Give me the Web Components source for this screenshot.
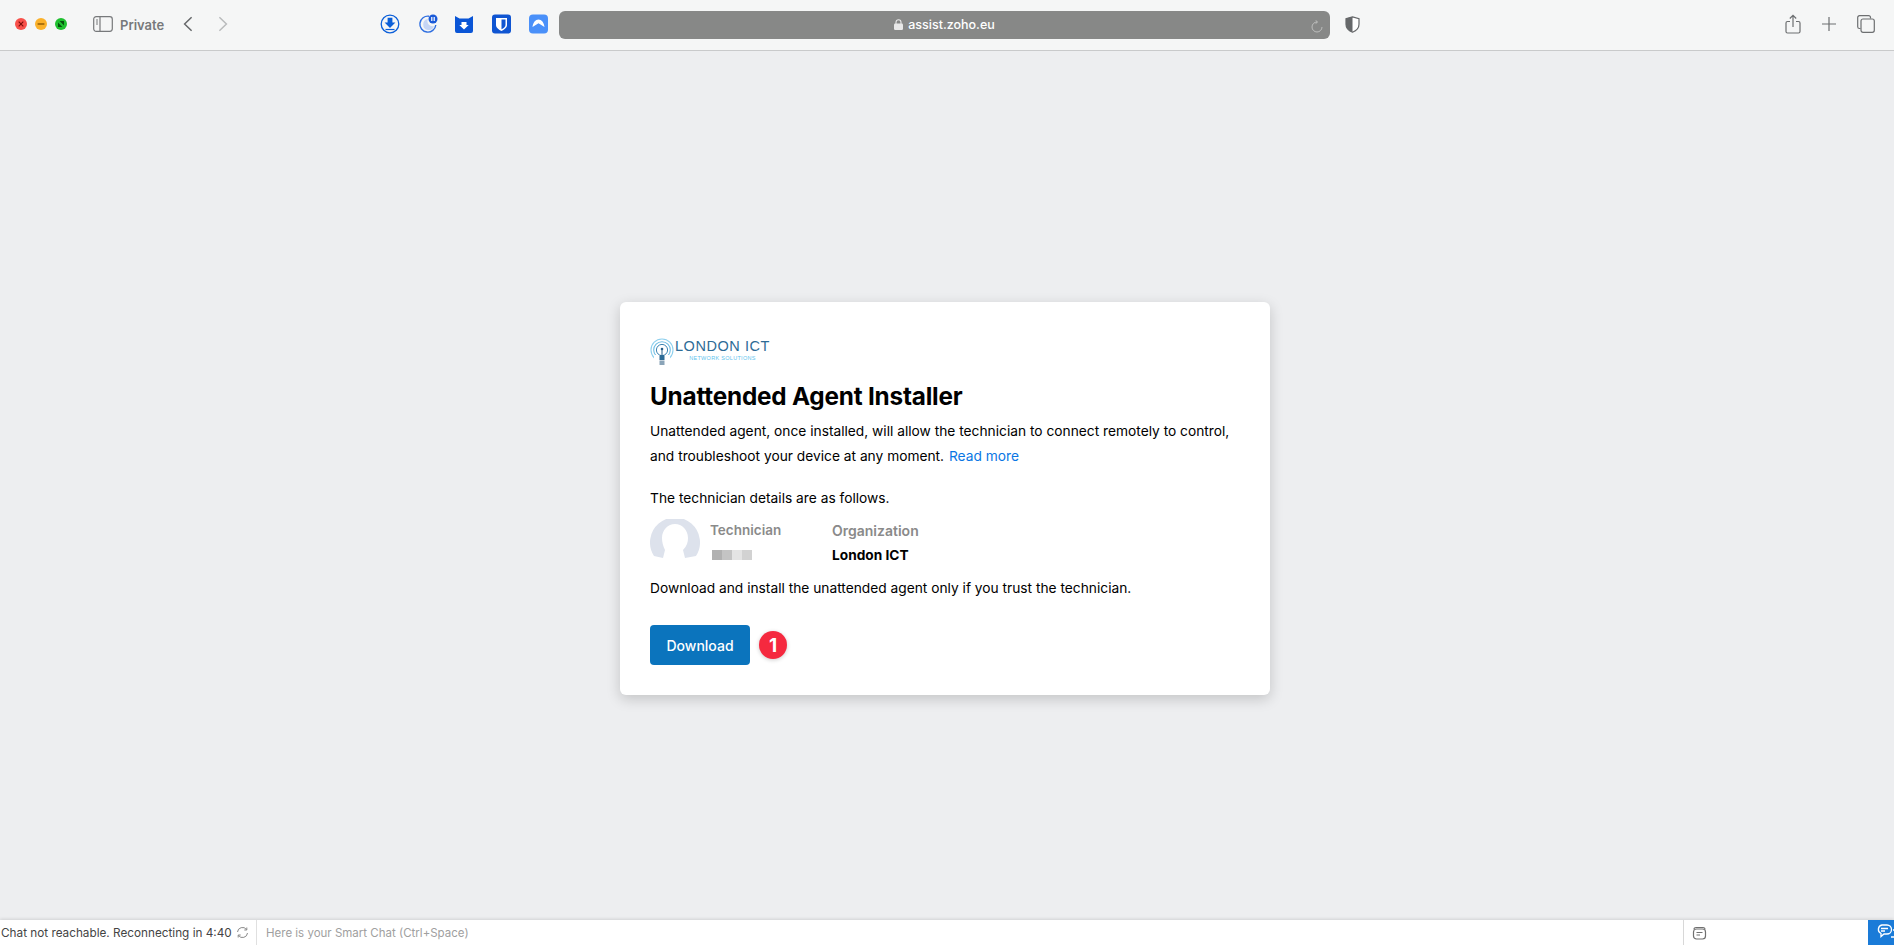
<!DOCTYPE html>
<html lang="en">
<head>
<meta charset="utf-8">
<title>Unattended Agent Installer</title>
<style>
  html, body { margin: 0; height: 100%; }
  body { font-family: Inter, "Liberation Sans", sans-serif; background: #edeef0; overflow: hidden; }
</style>
</head>
<body>
<app-shell>
  <browser-toolbar slot="top" url="assist.zoho.eu"></browser-toolbar>
  <installer-card>
    <brand-logo slot="logo"></brand-logo>
    <span slot="title">Unattended Agent Installer</span>
    <technician-details slot="details" organization="London ICT"></technician-details>
  </installer-card>
  <chat-bar slot="bottom"></chat-bar>
</app-shell>

<script>
class AppShell extends HTMLElement {
  constructor() {
    super();
    this.attachShadow({ mode: 'open' });
    this.shadowRoot.innerHTML = `
      <style>
        :host { display: flex; flex-direction: column; width: 1894px; height: 945px; }
        main { flex: 1; display: flex; justify-content: center; align-items: flex-start; padding: 251px 4px 0 0; box-sizing: border-box; }
      </style>
      <slot name="top"></slot>
      <main><slot></slot></main>
      <slot name="bottom"></slot>
    `;
  }
}

class BrowserToolbar extends HTMLElement {
  constructor() {
    super();
    this.attachShadow({ mode: 'open' });
  }

  connectedCallback() {
    const url = this.getAttribute('url') || '';
    this.shadowRoot.innerHTML = `
      <style>
        :host { display: flex; align-items: center; height: 50px; background: #f5f6f6; border-bottom: 1px solid #c9cacb; flex: none; box-sizing: content-box; font-family: Inter, sans-serif; }
        svg { display: block; flex: none; }
        .lights { display: flex; gap: 8px; margin-left: 15px; margin-top: -2px; }
        .lights svg { width: 12px; height: 12px; }
        .sidebar { margin-left: 26px; margin-top: -2px; }
        .private { margin-left: 7px; font-size: 13px; font-weight: 600; color: #77797b; width: 46px; margin-top: -1px; }
        .back { margin-left: 17px; margin-top: -2px; }
        .forward { margin-left: 25px; margin-top: -2px; }
        .exts { display: flex; gap: 18px; margin-left: 152px; margin-top: -2px; }
        .cat { margin-left: -1px; margin-right: 1px; }
        .url { margin-left: 11px; width: 771px; height: 28px; margin-top: -1px; border-radius: 6px; background: #878887; display: flex; align-items: center; justify-content: center; position: relative; color: #fff; font-size: 12.500px; font-weight: 500; gap: 5px; }
        .url .reload { position: absolute; right: 7px; top: 9px; }
        .shield { margin-left: 15px; margin-top: -2px; }
        .right { margin-left: auto; margin-right: 19px; display: flex; gap: 21px; align-items: center; margin-top: -2px; }
      </style>
      <div class="lights">
        <svg viewBox="0 0 12 12"><circle cx="6" cy="6" r="6" fill="#f8504a"/><path d="M3.700 3.700l4.600 4.600M8.300 3.700l-4.600 4.600" stroke="#7a0c08" stroke-width="1.100"/></svg>
        <svg viewBox="0 0 12 12"><circle cx="6" cy="6" r="6" fill="#fbb12a"/><path d="M2.600 6h6.800" stroke="#8c5a05" stroke-width="1.400"/></svg>
        <svg viewBox="0 0 12 12"><circle cx="6" cy="6" r="6" fill="#1fc02f"/><path d="M3 9V4.600L7.400 9zM9 3v4.400L4.600 3z" fill="#06520e"/></svg>
      </div>
      <svg class="sidebar" width="20" height="16" viewBox="0 0 20 16" fill="none" stroke="#77797b" stroke-width="1.200"><rect x=".7" y=".7" width="18.600" height="14.600" rx="2.500"/><path d="M7 .7v14.600"/><path d="M3 4h2M3 6h2M3 8h2" stroke-width="1"/></svg>
      <span class="private">Private</span>
      <svg class="back" width="10" height="16" viewBox="0 0 10 16" fill="none" stroke="#66686a" stroke-width="1.500"><path d="M8.600 1.200L1.600 8l7 6.800"/></svg>
      <svg class="forward" width="10" height="16" viewBox="0 0 10 16" fill="none" stroke="#b9bbbc" stroke-width="1.500"><path d="M1.400 1.200L8.400 8l-7 6.800"/></svg>
      <div class="exts">
        <svg width="20" height="20" viewBox="0 0 20 20"><circle cx="10" cy="10" r="8.800" fill="none" stroke="#0b5fd9" stroke-width="1.300"/><path d="M7.600 3.800h4.800v4.800h3L10 14 4.600 8.600h3z" fill="#0b5fd9"/><path d="M5.500 15.500h9" stroke="#0b5fd9" stroke-width="1.200"/></svg>
        <svg width="20" height="20" viewBox="0 0 20 20"><path d="M11 2.200A8 8 0 1 0 17.800 11" fill="none" stroke="#2f6fe0" stroke-width="1.400"/><path d="M10 5a5.500 5.500 0 1 0 6 7 5 5 0 0 1-6-7z" fill="#c5d5f5"/><circle cx="15" cy="5" r="4.500" fill="#1a5ad8"/><path d="M13.800 3v4M16.200 3v4" stroke="#fff" stroke-width="1.200"/></svg>
        <svg class="cat" width="18" height="20" viewBox="0 0 18 20"><path d="M0 2l4.500 2.600h9L18 2v15a2 2 0 0 1-2 2H2a2 2 0 0 1-2-2z" fill="#0a55d6"/><path d="M6.500 8h5v3h2.200L9 15.400 4.300 11h2.200z" fill="#fff"/></svg>
        <svg width="19" height="20" viewBox="0 0 19 20"><rect width="19" height="19" y=".5" rx="3" fill="#0f55d2"/><path d="M4 4h11v7c0 3-3 4.600-5.500 6C7 15.600 4 14 4 11z" fill="#fff"/><path d="M9.500 5.500H13.500V11c0 2-2 3.200-4 4.300z" fill="#0f55d2"/></svg>
        <svg width="19" height="20" viewBox="0 0 19 20"><rect width="19" height="19" y=".5" rx="4" fill="#4a90f9"/><path d="M3.500 13C4 8.500 6.500 5.500 9.500 5.500S15 8.500 15.500 13L9.500 9.200z" fill="#fff"/></svg>
      </div>
      <div class="url">
        <svg width="9" height="11" viewBox="0 0 9 11"><path d="M2 5V3.200a2.500 2.500 0 0 1 5 0V5" fill="none" stroke="#e8e8e8" stroke-width="1.100"/><rect y="4.500" width="9" height="6.500" rx="1.200" fill="#e8e8e8"/></svg>
        <span>${url}</span>
        <svg class="reload" width="12" height="13" viewBox="0 0 12 13" fill="none" stroke="#bdbebd" stroke-width="1"><path d="M6 2a5 5 0 1 0 5 5"/><path d="M4.600 .4L6.600 2 4.600 3.600"/></svg>
      </div>
      <svg class="shield" width="15" height="17" viewBox="0 0 15 17"><path d="M7.500 .8L14 2.600v5.600c0 4-3 6.600-6.500 8C4 14.800 1 12.200 1 8.200V2.600z" fill="#fff" stroke="#66686a" stroke-width="1.200"/><path d="M7.500 .8v15.400C4 14.800 1 12.200 1 8.200V2.600z" fill="#66686a"/></svg>
      <div class="right">
        <svg width="16" height="20" viewBox="0 0 16 20" fill="none" stroke="#6d6f71" stroke-width="1.200"><path d="M5 7.500H2.500a1.500 1.500 0 0 0-1.500 1.500v8.500A1.500 1.500 0 0 0 2.500 19h11a1.500 1.500 0 0 0 1.500-1.500V9a1.500 1.500 0 0 0-1.500-1.500H11"/><path d="M8 13V1.500M4.800 4.500L8 1.300l3.200 3.200"/></svg>
        <svg width="14" height="14" viewBox="0 0 14 14" fill="none" stroke="#6d6f71" stroke-width="1.200"><path d="M7 0v14M0 7h14"/></svg>
        <svg width="18" height="18" viewBox="0 0 18 18" fill="none" stroke="#6d6f71" stroke-width="1.200"><path d="M13.500 3.500V2.500a1.800 1.800 0 0 0-1.800-1.800H2.500A1.800 1.800 0 0 0 .7 2.500v9.200a1.800 1.800 0 0 0 1.800 1.800h1"/><rect x="4" y="4" width="13.300" height="13.300" rx="2"/></svg>
      </div>
    `;
  }
}

class BrandLogo extends HTMLElement {
  constructor() {
    super();
    this.attachShadow({ mode: 'open' });
    this.shadowRoot.innerHTML = `
      <style>
        :host { display: flex; align-items: flex-start; height: 29px; }
        svg { display: block; flex: none; margin-right: 1px; }
        .words { display: flex; flex-direction: column; align-items: center; }
        .name { font-family: "Liberation Sans", sans-serif; font-size: 14.500px; line-height: 15px; margin-top: 1px; color: #2d6b96; letter-spacing: .55px; white-space: nowrap; }
        .sub { font-family: "Liberation Sans", sans-serif; font-size: 5.500px; line-height: 7px; color: #5fc4ee; letter-spacing: .3px; white-space: nowrap; margin-top: 1px; }
      </style>
      <svg width="24" height="28" viewBox="0 0 24 28" fill="none">
        <circle cx="12" cy="12" r="11" stroke="#8fd0ee" stroke-width="1.100"/>
        <circle cx="12" cy="12" r="8.300" stroke="#6fbde3" stroke-width="1.100"/>
        <circle cx="12" cy="12" r="5.600" stroke="#3d84b3" stroke-width="1"/>
        <rect x="4" y="17" width="16" height="8" fill="#fff"/>
        <circle cx="12" cy="11" r="1.300" fill="#245f8a"/>
        <path d="M12 11v7" stroke="#245f8a"/>
        <rect x="9.500" y="17" width="5" height="5" fill="#2d6b96"/>
        <rect x="9.500" y="22.500" width="5" height="4.500" fill="#8aa4b8"/>
      </svg>
      <div class="words">
        <span class="name">LONDON ICT</span>
        <span class="sub">NETWORK SOLUTIONS</span>
      </div>
    `;
  }
}

class TechnicianDetails extends HTMLElement {
  constructor() {
    super();
    this.attachShadow({ mode: 'open' });
  }

  connectedCallback() {
    const org = this.getAttribute('organization') || '';
    this.shadowRoot.innerHTML = `
      <style>
        :host { display: flex; align-items: flex-start; font-size: 13.500px; }
        .avatar { width: 50px; height: 42px; margin-right: 10px; flex: none; }
        .col { display: flex; flex-direction: column; }
        .tech { width: 122px; }
        .org { font-size: 14px; }
        .label { font-weight: 600; color: #8a8a8a; line-height: 17px; margin-top: 3px; white-space: nowrap; }
        .blur { display: flex; margin: 11px 0 0 2px; }
        .blur i { width: 10px; height: 10px; }
        .value { font-weight: 700; color: #000; font-size: 13.700px; line-height: 17px; margin-top: 8px; white-space: nowrap; }
      </style>
      <svg class="avatar" viewBox="0 0 50 42">
        <path d="M4 37A25 25 0 1 1 46 37L35 39 33 31C37 27 38 23 38 19 38 11 32 5 25 5 18 5 12 11 12 19 12 23 13 27 15 31L13 39Z" fill="#dde2ec"/>
      </svg>
      <div class="col tech">
        <span class="label">Technician</span>
        <span class="blur"><i style="background:#b1b1b1"></i><i style="background:#c4c4c4"></i><i style="background:#e4e4e4"></i><i style="background:#d2d2d2"></i></span>
      </div>
      <div class="col org">
        <span class="label">Organization</span>
        <span class="value">${org}</span>
      </div>
    `;
  }
}

class InstallerCard extends HTMLElement {
  constructor() {
    super();
    this.attachShadow({ mode: 'open' });
    this.shadowRoot.innerHTML = `
      <style>
        :host { display: block; width: 650px; height: 393px; box-sizing: border-box; padding: 36px 30px 0; background: #fff; border-radius: 6px; box-shadow: 0 4px 14px rgba(0,0,0,.18); color: #000; font-size: 13.750px; }
        h1 { margin: 13px 0 0; font-size: 24.300px; line-height: 32px; font-weight: 700; color: #000; letter-spacing: -.2px; }
        p { margin: 0; line-height: 25px; }
        .intro { margin-top: 7px; }
        a { color: #0a76e4; text-decoration: none; margin-left: 1px; }
        .follows { margin-top: 17px; }
        .details { margin-top: 8px; }
        .trust { margin-top: 12px; }
        .actions { display: flex; align-items: center; gap: 9px; margin-top: 24px; }
        button { width: 100px; height: 40px; border: 0; border-radius: 4px; background: #0b74bd; color: #fff; font: 500 14px Inter, sans-serif; padding: 0; }
        .badge { width: 28px; height: 28px; border-radius: 50%; background: #f5293f; color: #fff; display: flex; align-items: center; justify-content: center; font-size: 19px; font-weight: 700; box-shadow: 0 1px 4px rgba(0,0,0,.2); }
      </style>
      <slot name="logo"></slot>
      <h1><slot name="title"></slot></h1>
      <p class="intro">Unattended agent, once installed, will allow the technician to connect remotely to control,<br>and troubleshoot your device at any moment. <a href="#">Read more</a></p>
      <p class="follows">The technician details are as follows.</p>
      <div class="details"><slot name="details"></slot></div>
      <p class="trust">Download and install the unattended agent only if you trust the technician.</p>
      <div class="actions"><button>Download</button><span class="badge">1</span></div>
    `;
  }
}

class ChatBar extends HTMLElement {
  constructor() {
    super();
    this.attachShadow({ mode: 'open' });
    this.shadowRoot.innerHTML = `
      <style>
        :host { display: flex; align-items: stretch; height: 25px; flex: none; background: #fff; box-shadow: 0 -1px 3px rgba(0,0,0,.12); font-size: 11.750px; position: relative; }
        .status { width: 257px; box-sizing: border-box; padding-left: 1px; display: flex; align-items: center; gap: 4px; color: #444; border-right: 1px solid #e0e0e0; white-space: nowrap; }
        .input { flex: 1; padding-left: 9px; display: flex; align-items: center; color: #a0a0a0; font-size: 11.500px; }
        .tools { width: 185px; box-sizing: border-box; padding-left: 8px; display: flex; align-items: center; border-left: 1px solid #d8d8d8; }
        .chat { width: 26px; background: #1a7bd8; display: flex; align-items: center; padding-left: 9px; box-sizing: border-box; overflow: hidden; }
        svg { display: block; flex: none; }
      </style>
      <div class="status">
        <span>Chat not reachable. Reconnecting in 4:40</span>
        <svg width="13" height="13" viewBox="0 0 13 13" fill="none" stroke="#888" stroke-width="1"><path d="M1.500 6A5 5 0 0 1 10.500 3.500M11.500 7A5 5 0 0 1 2.500 9.500"/><path d="M10.800 1.500v2.500H8.300M2.200 11.500V9h2.500"/></svg>
      </div>
      <div class="input">Here is your Smart Chat (Ctrl+Space)</div>
      <div class="tools">
        <svg width="15" height="14" viewBox="0 0 15 14" fill="none" stroke="#707070" stroke-width="1.200"><path d="M2 3.500C2 2 3 1.500 4 1.500h7c1 0 2 .5 2 2"/><rect x="1.500" y="3" width="12" height="10" rx="3"/><path d="M4.500 6.500h6M4.500 9h3.500"/></svg>
      </div>
      <div class="chat">
        <svg width="24" height="18" viewBox="0 0 24 18" fill="none" stroke="#fff" stroke-width="1.300"><path d="M5 1h5a4.500 4.500 0 0 1 0 9H7l-3 2.500v-3A4.500 4.500 0 0 1 5 1z"/><path d="M4 4.500h7M4 7h4"/><path d="M16 6h2a3.500 3.500 0 0 1 2 6.500V15l-3-2h-3"/></svg>
      </div>
    `;
  }
}

customElements.define('app-shell', AppShell);
customElements.define('browser-toolbar', BrowserToolbar);
customElements.define('brand-logo', BrandLogo);
customElements.define('technician-details', TechnicianDetails);
customElements.define('installer-card', InstallerCard);
customElements.define('chat-bar', ChatBar);
</script>
</body>
</html>
